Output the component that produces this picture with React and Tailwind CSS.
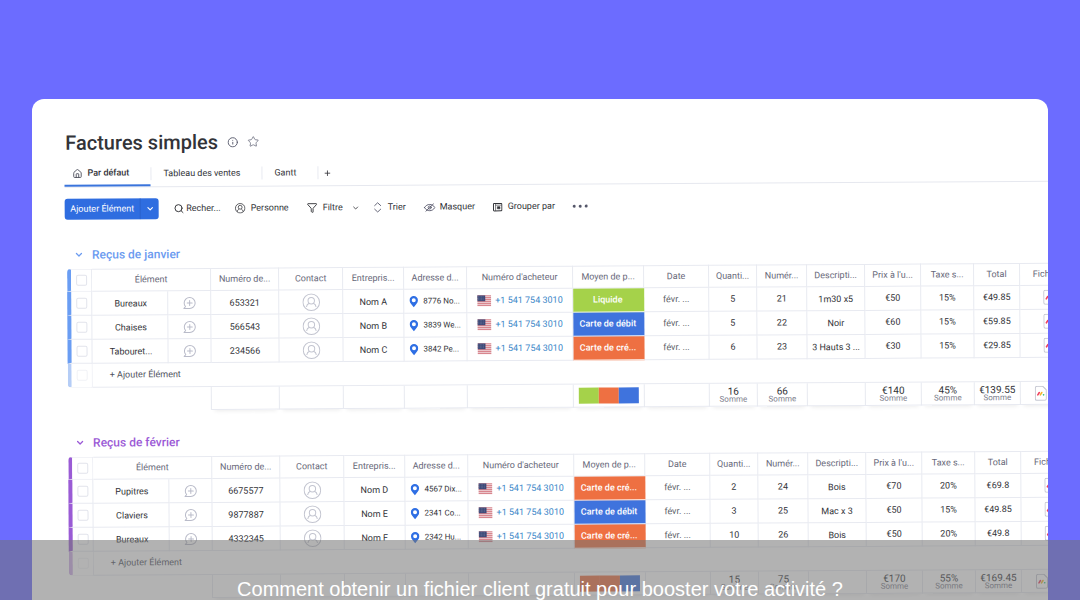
import React from "react";
import { ChevronDown, Filter, House, Info, Plus, Search, Star } from "lucide-react";

const GREEN = "bg-[#a5d24a]";
const BLUE = "bg-[#3f73dd]";
const ORANGE = "bg-[#ee7042]";

const groups = [
  {
    title: "Reçus de janvier",
    text: "text-[#6b9bf0]",
    bar: "border-l-[#6a9df3]",
    barLight: "border-l-[#b5cdf6]",
    rows: [
      ["Bureaux", "653321", "Nom A", "8776 No...", "Liquide", GREEN, "5", "21", "1m30 x5", "€50", "15%", "€49.85"],
      ["Chaises", "566543", "Nom B", "3839 We...", "Carte de débit", BLUE, "5", "22", "Noir", "€60", "15%", "€59.85"],
      ["Tabouret...", "234566", "Nom C", "3842 Pe...", "Carte de cré...", ORANGE, "6", "23", "3 Hauts 3 ...", "€30", "15%", "€29.85"],
    ],
    split: [GREEN, ORANGE, BLUE],
    sums: ["16", "66", "", "€140", "45%", "€139.55"],
  },
  {
    title: "Reçus de février",
    text: "text-[#9b5ad6]",
    bar: "border-l-[#9a5bd5]",
    barLight: "border-l-[#cfaee8]",
    rows: [
      ["Pupitres", "6675577", "Nom D", "4567 Dix...", "Carte de cré...", ORANGE, "2", "24", "Bois", "€70", "20%", "€69.8"],
      ["Claviers", "9877887", "Nom E", "2341 Co...", "Carte de débit", BLUE, "3", "25", "Mac x 3", "€50", "15%", "€49.85"],
      ["Bureaux", "4332345", "Nom F", "2342 Hu...", "Carte de cré...", ORANGE, "10", "26", "Bois", "€50", "20%", "€49.8"],
    ],
    split: [ORANGE, ORANGE, BLUE],
    sums: ["15", "75", "", "€170", "55%", "€169.45"],
  },
];

const headers = [
  "Numéro de...", "Contact", "Entrepris...", "Adresse d...", "Numéro d'acheteur", "Moyen de p...", "Date",
  "Quanti...", "Numér...", "Descripti...", "Prix à l'u...", "Taxe s...", "Total", "Fichiers",
];

const cell = "border-b border-r border-[#e8eaf1] p-0 text-center";
const sumCell = `${cell} shadow-[0_4px_4px_-3px_#00000014]`;

function PersonIcon({ className }) {
  return (
    <svg viewBox="0 0 20 20" fill="none" stroke="currentColor" className={className}>
      <circle cx="10" cy="10" r="8.6" strokeWidth="1.4" />
      <circle cx="10" cy="8.2" r="3.5" strokeWidth="1.4" />
      <path d="M4.6 16.3c.3-2.5 1.6-3.9 3.4-4.7M15.4 16.3c-.3-2.5-1.6-3.9-3.4-4.7" strokeWidth="1.4" />
    </svg>
  );
}

function AvatarIcon() {
  return (
    <svg viewBox="0 0 18 18" fill="none" stroke="#c3c5d0" className="mx-auto size-[18px]">
      <circle cx="9" cy="9" r="8.3" />
      <circle cx="9" cy="7.4" r="3.2" />
      <path d="M4.200 13.600c.2-2 1.200-3.100 2.800-3.700M13.800 13.600c-.2-2-1.200-3.100-2.800-3.700" />
    </svg>
  );
}

function ChatPlusIcon() {
  return (
    <svg viewBox="0 0 14 14" fill="none" stroke="#b9bbc9" strokeLinecap="round" strokeLinejoin="round" className="size-[14px]">
      <path d="M1.500 12.400H7.300A5.500 5.500 0 1 0 1.900 6.900C1.900 8.400 2.400 9.600 3.200 10.500Z" />
      <path d="M7.400 4.400v5M4.900 6.900h5" />
    </svg>
  );
}

function PinIcon() {
  return (
    <svg viewBox="0 0 9 12" className="h-3 w-[9px] shrink-0">
      <path fillRule="evenodd" fill="#2f6fe4" d="M4.5.3A4.2 4.2 0 0 0 .3 4.5C.3 7.300 2.600 8.900 4.500 11.700 6.400 8.900 8.700 7.300 8.700 4.500A4.200 4.200 0 0 0 4.500.300ZM4.500 2.500a2 2 0 1 1 0 4 2 2 0 0 1 0-4Z" />
    </svg>
  );
}

function FlagIcon() {
  return (
    <svg viewBox="0 0 14 11" className="h-[11px] w-[14px] shrink-0">
      <rect width="14" height="11" fill="#f3e6e8" />
      {[0, 2, 4, 6, 8, 10].map((y) => (
        <rect key={y} y={y} width="14" height="1" fill="#cf6670" />
      ))}
      <rect width="8" height="6" fill="#3d4a78" />
      <path d="M1 1.500h6M1 3h6M1 4.500h6" stroke="#7f89ab" strokeWidth=".6" strokeDasharray=".7 .8" />
    </svg>
  );
}

function FileIcon() {
  return (
    <svg viewBox="0 0 12 15" className="h-[15px] w-3 shrink-0">
      <path d="M2 .5h6L11.500 4v9A1.500 1.500 0 0 1 10 14.500H2A1.500 1.500 0 0 1 .5 13V2A1.500 1.500 0 0 1 2 .5Z" fill="#fff" stroke="#c2c4cf" />
      <g strokeWidth="1.600" strokeLinecap="round">
        <path d="M3 9 4.500 6.700" stroke="#f0405f" />
        <path d="M5.500 9 7 6.700" stroke="#f6b92c" />
        <path d="M8.700 9h.1" stroke="#2fc37c" />
      </g>
    </svg>
  );
}

function SortIcon() {
  return (
    <svg viewBox="0 0 8 11" fill="none" stroke="currentColor" strokeWidth=".9" strokeLinecap="round" strokeLinejoin="round" className="h-[11px] w-2 text-[#55576a]">
      <path d="M1 3.700 4 .9l3 2.800M1 7.300l3 2.800 3-2.800" />
    </svg>
  );
}

function HideIcon() {
  return (
    <svg viewBox="0 0 12 10" fill="none" stroke="currentColor" strokeWidth=".9" strokeLinecap="round" className="h-[10px] w-3 text-[#55576a]">
      <path d="M.8 5C2.200 2.800 4 1.900 6 1.900S9.800 2.800 11.200 5C9.800 7.200 8 8.100 6 8.100S2.200 7.200.8 5Z" />
      <circle cx="6" cy="5" r="1.500" />
      <path d="M2.200 8.600 9.800 1.400" />
    </svg>
  );
}

function GroupIcon() {
  return (
    <svg viewBox="0 0 10 10" fill="none" stroke="currentColor" className="size-[10px]">
      <rect x=".8" y="1.300" width="8.400" height="7.400" rx=".8" />
      <path d="M2.900 1.300v7.400M2.900 3h6" strokeWidth=".6" />
      <rect x="4.700" y="4.500" width="2.600" height="2.200" fill="currentColor" strokeWidth=".6" />
    </svg>
  );
}

function Box({ label, faint }) {
  return (
    <input
      type="checkbox"
      aria-label={label}
      className={`mx-auto block size-[11px] appearance-none rounded-[2px] border bg-white ${faint ? "border-[#f1f2f6]" : "border-[#e2e4ec]"}`}
    />
  );
}

function ToolButton({ className, children }) {
  return <button type="button" className={`flex items-center whitespace-nowrap ${className}`}>{children}</button>;
}

function Group({ group }) {
  return (
    <section className="h-[188px]">
      <h2 className={`flex h-[26px] items-center gap-2 pb-[2px] pl-[7px] text-[12px] font-medium ${group.text}`}>
        <ChevronDown className="size-[10px]" strokeWidth={3} />
        {group.title}
      </h2>
      <table className="w-[1011px] table-fixed border-separate border-spacing-0 text-[9px] leading-none whitespace-nowrap text-[#323338]">
        <colgroup>
          <col className="w-[25px]" />
          <col className="w-[76px]" />
          <col className="w-[43px]" />
          <col className="w-[68px]" />
          <col className="w-[64px]" />
          <col className="w-[61px]" />
          <col className="w-[63px]" />
          <col className="w-[106px]" />
          <col className="w-[71px]" />
          <col className="w-[65px]" />
          <col className="w-[48px]" />
          <col className="w-[50px]" />
          <col className="w-[58px]" />
          <col className="w-[56px]" />
          <col className="w-[53px]" />
          <col className="w-[46px]" />
          <col className="w-[58px]" />
        </colgroup>
        <thead>
          <tr className="h-[23px] text-[#676879]">
            <th className={`${cell} rounded-tl-[4px] border-t border-l-4 ${group.bar}`}>
              <Box label={`Tout sélectionner, ${group.title}`} />
            </th>
            <th colSpan={2} className={`${cell} border-t font-normal`}>Élément</th>
            {headers.map((h, i) => (
              <th key={i} className={`${cell} border-t font-normal`}>{h}</th>
            ))}
          </tr>
        </thead>
        <tbody>
          {group.rows.map(([name, num, firm, address, pay, payColor, qty, n, desc, price, tax, total]) => (
            <tr key={num} className="h-6">
              <td className={`${cell} border-l-4 ${group.bar}`}><Box label={name} /></td>
              <td className={`${cell} pt-[2px] pl-[2px]`}>{name}</td>
              <td className={cell}>
                <button type="button" aria-label={`Commenter ${name}`} className="mx-auto block"><ChatPlusIcon /></button>
              </td>
              <td className={`${cell} pt-[2px]`}>{num}</td>
              <td className={cell}><AvatarIcon /></td>
              <td className={`${cell} pt-[2px]`}>{firm}</td>
              <td className={cell}>
                <div className="flex items-center gap-[5px] pl-[5px] text-[8px]"><PinIcon />{address}</div>
              </td>
              <td className={cell}>
                <div className="flex items-center gap-1 pl-[10px]">
                  <FlagIcon />
                  <a href="tel:+15417543010" className="text-[#3a86c8]">+1 541 754 3010</a>
                </div>
              </td>
              <td className={`border-b border-white p-0 pr-[2px] text-center font-medium text-white ${payColor}`}>{pay}</td>
              <td className={`${cell} text-[#5d5f68]`}>févr. ...</td>
              <td className={cell}>{qty}</td>
              <td className={cell}>{n}</td>
              <td className={`${cell} pt-[2px]`}>{desc}</td>
              <td className={cell}>{price}</td>
              <td className={cell}>{tax}</td>
              <td className={cell}>{total}</td>
              <td className={cell}><div className="flex justify-center"><FileIcon /></div></td>
            </tr>
          ))}
          <tr className="h-6">
            <td className={`${cell} rounded-bl-[4px] border-l-4 ${group.barLight}`}><Box faint label="Nouvel élément" /></td>
            <td colSpan={16} className="border-b border-[#e8eaf1] p-0 pl-[17px] text-left">
              <button type="button" className="text-[#50525e]">+ Ajouter Élément</button>
            </td>
          </tr>
        </tbody>
        <tfoot>
          <tr className="h-[23px]">
            <td colSpan={3} className="border-r border-[#e8eaf1] p-0" />
            {[0, 1, 2, 3, 4].map((i) => (
              <td key={i} className={sumCell} />
            ))}
            <td className={sumCell}>
              <div className="mx-[5px] flex h-4">
                {group.split.map((color, i) => (
                  <span key={i} className={`flex-1 ${color}`} />
                ))}
              </div>
            </td>
            <td className={sumCell} />
            {group.sums.map((sum, i) => (
              <td key={i} className={sumCell}>
                {sum && (
                  <>
                    <div className="text-[10px] leading-[9px]">{sum}</div>
                    <div className="text-[8px] leading-[8px] text-[#7c7e8c]">Somme</div>
                  </>
                )}
              </td>
            ))}
            <td className={sumCell}>
              <div className="flex pl-[14px]"><FileIcon /></div>
            </td>
          </tr>
        </tfoot>
      </table>
    </section>
  );
}

export default function App() {
  return (
    <div className="relative flex h-screen flex-col overflow-hidden bg-[#6c6cff] px-8 pt-[99px] font-['Roboto',sans-serif]">
      <main className="min-h-0 flex-1 overflow-hidden rounded-t-xl bg-white text-[#323338]">
        <div className="origin-top-left -rotate-[0.35deg] pt-[29px] pl-8">
          <header className="flex h-[30px] items-center pl-px">
            <h1 className="text-[20px] font-medium">Factures simples</h1>
            <Info className="ml-[9px] size-[11px] text-[#55576a]" />
            <Star className="ml-[9px] size-3 text-[#7a7c8c]" strokeWidth={1.8} />
          </header>

          <nav className="mt-[2px] flex h-7 items-end border-b border-[#e6e8ef] text-[9px]">
            <a href="#defaut" className="flex h-7 w-[86px] items-center gap-[5px] border-b-2 border-[#3a74dc] pt-[3px] pl-2 font-medium">
              <House className="size-[10px] text-[#50525e]" strokeWidth={2.200} />
              Par défaut
            </a>
            <a href="#ventes" className="mb-[6px] flex h-[13px] items-center border-l border-[#e8eaf1] pr-[21px] pl-3">Tableau des ventes</a>
            <a href="#gantt" className="mb-[6px] flex h-[13px] items-center border-l border-[#e8eaf1] pr-[21px] pl-3">Gantt</a>
            <button type="button" aria-label="Ajouter une vue" className="mb-[6px] flex h-[13px] items-center border-l border-[#e8eaf1] pl-[5px]">
              <Plus className="size-2" strokeWidth={2.500} />
            </button>
          </nav>

          <div className="mt-[11px] flex h-[21px] items-center text-[9px]">
            <div className="flex h-[21px] items-stretch overflow-hidden rounded-[3px] bg-[#2f6de0] text-white">
              <button type="button" className="w-[75px] whitespace-nowrap">Ajouter Élément</button>
              <button type="button" aria-label="Plus d'options d'ajout" className="flex w-[19px] items-center justify-center border-l border-[#2a62cb]">
                <ChevronDown className="size-[9px]" strokeWidth={3} />
              </button>
            </div>
            <ToolButton className="ml-[15px] w-[47px] gap-[2px]"><Search className="size-[11px]" strokeWidth={2.200} />Recher...</ToolButton>
            <ToolButton className="ml-[14px] w-[56px] gap-[5px]"><PersonIcon className="size-[11px]" />Personne</ToolButton>
            <ToolButton className="ml-4 w-[53px] gap-[5px]"><Filter className="size-[11px]" />Filtre<ChevronDown className="ml-1 size-2" strokeWidth={2.500} /></ToolButton>
            <ToolButton className="ml-[14px] w-[35px] gap-[6px]"><SortIcon />Trier</ToolButton>
            <ToolButton className="ml-[15px] w-[53px] gap-1"><HideIcon />Masquer</ToolButton>
            <ToolButton className="ml-4 w-[65px] gap-[5px]"><GroupIcon />Grouper par</ToolButton>
            <button type="button" aria-label="Plus d'options" className="ml-[15px] flex gap-[3px]">
              <span className="size-[3px] rounded-full bg-[#55576a]" />
              <span className="size-[3px] rounded-full bg-[#55576a]" />
              <span className="size-[3px] rounded-full bg-[#55576a]" />
            </button>
          </div>

          <div className="mt-[23px] pl-[2px]">
            {groups.map((group) => (
              <Group key={group.title} group={group} />
            ))}
          </div>
        </div>
      </main>

      <p className="absolute inset-x-0 bottom-0 h-[60px] overflow-hidden bg-[#737373]/55 pt-9 text-center font-['Liberation_Sans',sans-serif] text-[20px] leading-[26px] whitespace-nowrap text-white">
        Comment obtenir un fichier client gratuit pour booster votre activité ?
      </p>
    </div>
  );
}
